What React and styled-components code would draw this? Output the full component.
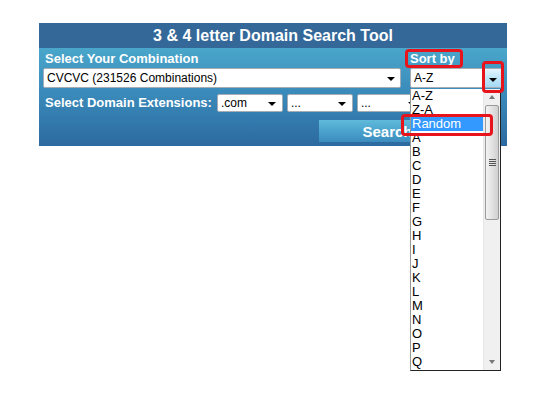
import React from 'react';
import styled, { createGlobalStyle } from 'styled-components';

const GlobalStyle = createGlobalStyle`
  html, body {
    margin: 0;
    padding: 0;
    background: #fff;
  }
  body {
    font-family: "Liberation Sans", Arial, sans-serif;
  }
`;

const sortOptions = ['A-Z', 'Z-A', 'Random', 'A', 'B', 'C', 'D', 'E', 'F', 'G', 'H', 'I', 'J', 'K', 'L', 'M', 'N', 'O', 'P', 'Q'];

const Page = styled.div`
  position: relative;
  width: 550px;
  height: 400px;
  padding: 23px 0 0 39px;
  box-sizing: border-box;
`;

const Panel = styled.div`
  width: 468px;
`;

const Header = styled.div`
  height: 25px;
  background: #336899;
  color: #fff;
  font-size: 16px;
  font-weight: bold;
  display: flex;
  align-items: center;
  justify-content: center;
`;

const Body = styled.div`
  background: linear-gradient(to bottom, #4aa6ca 0%, #3a8bbb 45%, #2c6aa0 100%);
  padding: 3px 6px 4px 4px;
  height: 98px;
  box-sizing: border-box;
  display: flex;
  flex-direction: column;
`;

const Row = styled.div`
  display: flex;
  align-items: center;
  gap: ${(p) => p.$gap || 0}px;
  margin-top: ${(p) => p.$top || 0}px;
`;

const Column = styled.div`
  position: relative;
  display: flex;
  flex-direction: column;
  width: ${(p) => p.$width}px;
  margin-left: ${(p) => p.$offset || 0}px;
`;

const Label = styled.div`
  color: #fff;
  font-size: 13px;
  font-weight: bold;
  line-height: 16px;
  padding-bottom: 1px;
  padding-left: ${(p) => p.$pad || 0}px;
  margin-right: ${(p) => p.$right || 0}px;
  white-space: nowrap;
`;

const Select = styled.div`
  position: relative;
  box-sizing: border-box;
  width: ${(p) => p.$width}px;
  height: ${(p) => p.$height || 20}px;
  background: #fff;
  border: 1px solid #a5acb5;
  border-radius: 2px;
  font-size: 12px;
  color: #000;
  display: flex;
  align-items: center;
  padding-left: 3px;
  white-space: nowrap;
  overflow: hidden;
`;

const Caret = styled.span`
  position: absolute;
  right: ${(p) => p.$right || 6}px;
  top: 50%;
  margin-top: -1px;
  width: 0;
  height: 0;
  border-left: 4px solid transparent;
  border-right: 4px solid transparent;
  border-top: 4px solid #000;
`;

const DropButton = styled.span`
  position: absolute;
  right: 0;
  top: 0;
  bottom: 0;
  width: 16px;
  background: linear-gradient(to bottom, #e4f4fc 0%, #bfe6f9 50%, #a6d9f4 100%);
  border-left: 1px solid #6aa8d0;
  display: flex;
  align-items: center;
  justify-content: center;
`;

const SmallCaret = styled.span`
  width: 0;
  height: 0;
  margin-top: 3px;
  border-left: 4px solid transparent;
  border-right: 4px solid transparent;
  border-top: 4px solid #000;
`;

const SearchButton = styled.div`
  margin: 8px 0 0 276px;
  width: 137px;
  height: 22px;
  background: linear-gradient(to bottom, #5fbadb 0%, #4ba3cd 50%, #3b8cbd 100%);
  color: #fff;
  font-size: 15px;
  font-weight: bold;
  display: flex;
  align-items: center;
  justify-content: center;
`;

const ListBox = styled.div`
  position: absolute;
  left: 410px;
  top: 89px;
  width: 91px;
  height: 282px;
  box-sizing: border-box;
  background: #fff;
  border: 1px solid #222;
  border-left: 1px solid #9a9a9a;
  border-top: none;
  display: flex;
  z-index: 2;
`;

const Items = styled.div`
  flex: 1;
  overflow: hidden;
`;

const Item = styled.div`
  height: 14px;
  line-height: 14px;
  font-size: 13px;
  padding-left: 1px;
  color: ${(p) => (p.$active ? '#fff' : '#000')};
  background: ${(p) => (p.$active ? '#3399ff' : 'transparent')};
  white-space: nowrap;
`;

const ScrollBar = styled.div`
  width: 16px;
  background: #f0f0f0;
  border-left: 1px solid #e6e6e6;
  display: flex;
  flex-direction: column;
  align-items: center;
`;

const ArrowBox = styled.div`
  height: 16px;
  width: 16px;
  display: flex;
  align-items: center;
  justify-content: center;
`;

const Tri = styled.span`
  width: 0;
  height: 0;
  border-left: 3.5px solid transparent;
  border-right: 3.5px solid transparent;
  ${(p) => (p.$up ? 'border-bottom: 4px solid #777;' : 'border-top: 4px solid #777;')}
`;

const Thumb = styled.div`
  width: 14px;
  height: 115px;
  box-sizing: border-box;
  border: 1px solid #9a9a9a;
  border-radius: 2px;
  background: linear-gradient(to right, #f3f3f3 0%, #e2e2e2 50%, #cfcfcf 100%);
  display: flex;
  flex-direction: column;
  align-items: center;
  justify-content: center;
  gap: 1px;
`;

const Grip = styled.span`
  width: 7px;
  height: 1px;
  background: #555;
`;

const Track = styled.div`
  flex: 1;
`;

const Mark = styled.div`
  position: absolute;
  left: ${(p) => p.$x}px;
  top: ${(p) => p.$y}px;
  width: ${(p) => p.$w}px;
  height: ${(p) => p.$h}px;
  box-sizing: border-box;
  border: 3px solid #e8141c;
  border-radius: 4px;
  z-index: 3;
  pointer-events: none;
`;

const App = () => {
  return (
    <Page>
      <GlobalStyle />
      <Panel>
        <Header>3 &amp; 4 letter Domain Search Tool</Header>
        <Body>
          <Row>
            <Column $width={358}>
              <Label $pad={2}>Select Your Combination</Label>
              <Select $width={358}>
                CVCVC (231526 Combinations)
                <Caret $right={5} />
              </Select>
            </Column>
            <Column $width={92} $offset={9}>
              <Label>Sort by</Label>
              <Select $width={92}>
                A-Z
                <DropButton>
                  <SmallCaret />
                </DropButton>
              </Select>
            </Column>
          </Row>
          <Row $gap={4} $top={6}>
            <Label $pad={2} $right={1}>
              Select Domain Extensions:
            </Label>
            <Select $width={66} $height={18}>
              .com
              <Caret />
            </Select>
            <Select $width={66} $height={18}>
              ...
              <Caret />
            </Select>
            <Select $width={66} $height={18}>
              ...
              <Caret />
            </Select>
          </Row>
          <SearchButton>Search</SearchButton>
        </Body>
      </Panel>

      <ListBox>
        <Items>
          {sortOptions.map((opt) => (
            <Item key={opt} $active={opt === 'Random'}>
              {opt}
            </Item>
          ))}
        </Items>
        <ScrollBar>
          <ArrowBox>
            <Tri $up />
          </ArrowBox>
          <Thumb>
            <Grip />
            <Grip />
            <Grip />
            <Grip />
          </Thumb>
          <Track />
          <ArrowBox>
            <Tri />
          </ArrowBox>
        </ScrollBar>
      </ListBox>

      <Mark $x={405} $y={49} $w={58} $h={19} />
      <Mark $x={482} $y={61} $w={22} $h={32} />
      <Mark $x={401} $y={114} $w={92} $h={22} />
    </Page>
  );
};

export default App;
